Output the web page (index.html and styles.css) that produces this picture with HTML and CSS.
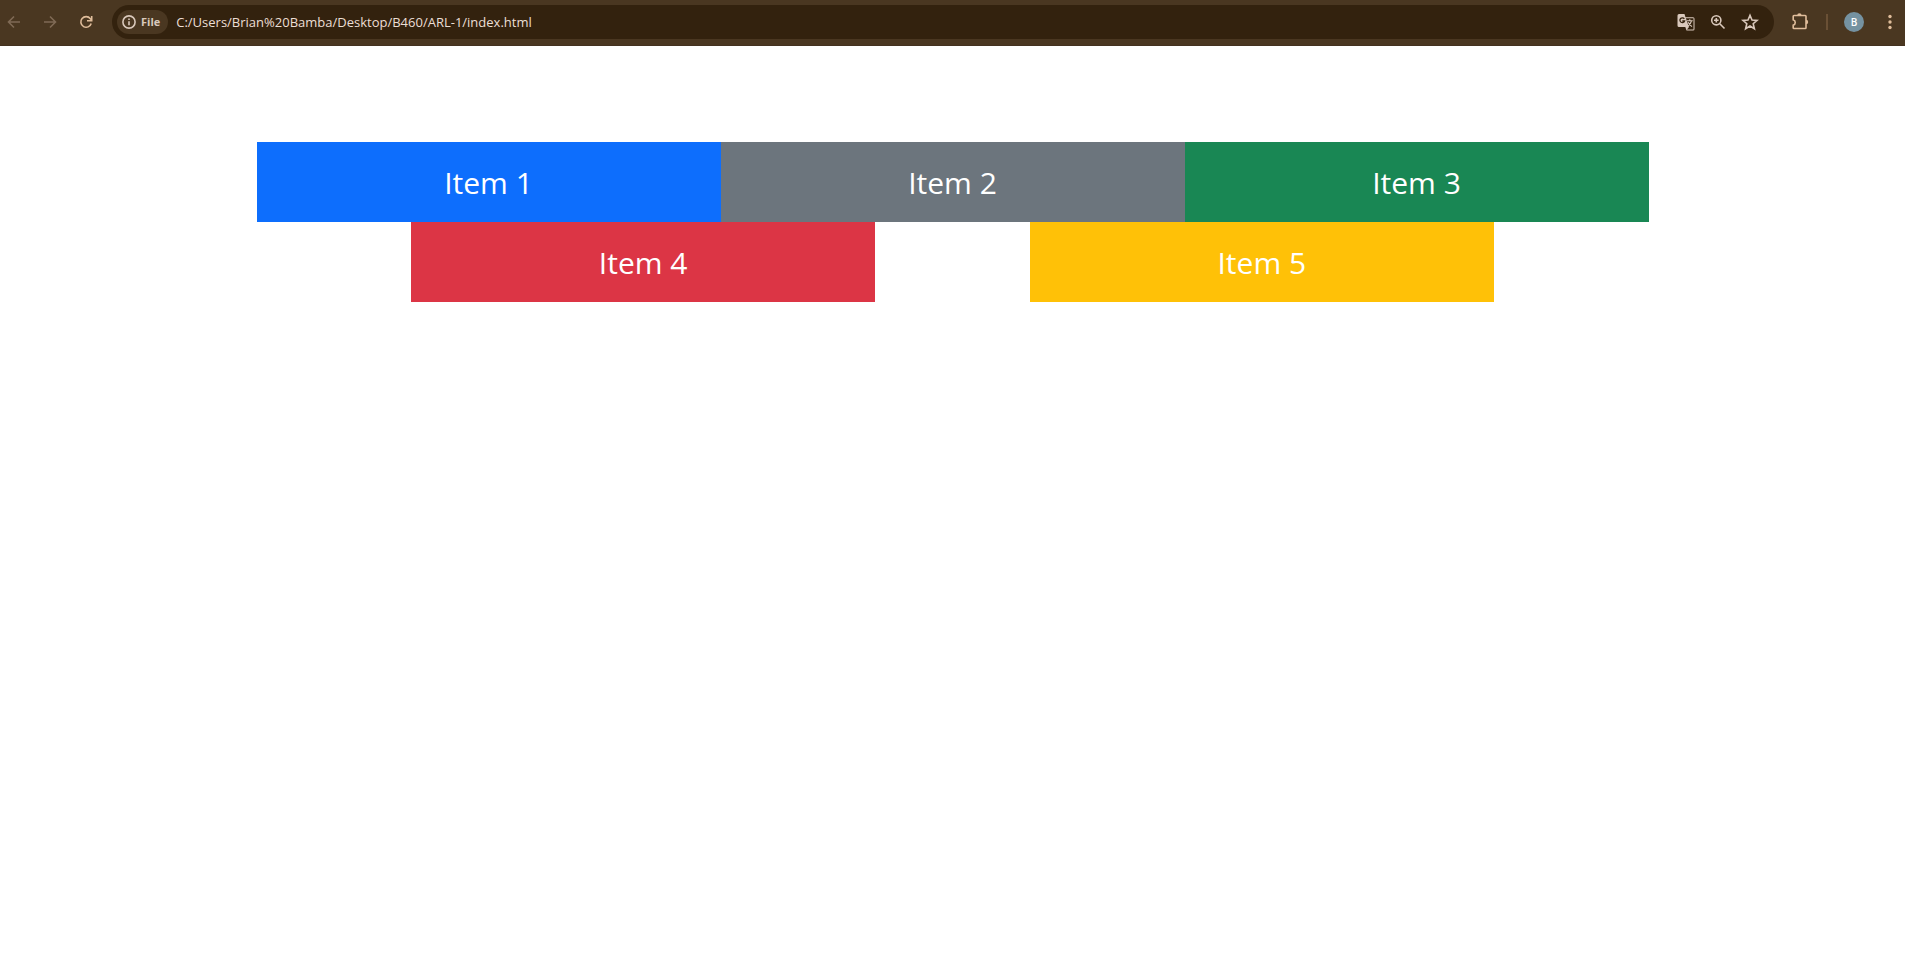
FILE: index.html
```
<!DOCTYPE html>
<html lang="en">
<head>
<meta charset="utf-8">
<title>ARL-1</title>
<link rel="stylesheet" href="styles.css">
</head>
<body>
<header class="toolbar">
  <nav class="nav" aria-label="History">
    <button class="icon-btn dim" aria-label="Back"><svg width="14" height="14" viewBox="0 0 14 14"><path d="M13 7H2M7 1.500L1.500 7L7 12.500"/></svg></button>
    <button class="icon-btn dim" aria-label="Forward"><svg width="14" height="14" viewBox="0 0 14 14"><path d="M1 7h11M7 1.500L12.500 7L7 12.500"/></svg></button>
    <button class="icon-btn" aria-label="Reload"><svg width="14" height="14" viewBox="0 0 14 14"><path d="M12.200 8.500A5.300 5.300 0 1 1 11.300 3.700L12.500 5M12.700 1v4.800H8"/></svg></button>
  </nav>
  <div class="address">
    <button class="chip"><svg width="14" height="14" viewBox="0 0 14 14"><circle cx="7" cy="7" r="6.100"/><path d="M7 6.200v4M7 3.500v1.500"/></svg>File</button>
    <input class="url" type="text" aria-label="Address" value="C:/Users/Brian%20Bamba/Desktop/B460/ARL-1/index.html">
    <div class="actions">
      <button class="action" aria-label="Translate"><svg width="18" height="18" viewBox="0 0 18 18"><path class="fill" d="M2 1h5.500l1 3.200H16a1.500 1.500 0 0 1 1.500 1.500V16a1.500 1.500 0 0 1-1.500 1.500H9.500L8.300 14H2A1.500 1.500 0 0 1 .5 12.500v-10A1.500 1.500 0 0 1 2 1z"/><path class="cut" d="M8.900 5.200h7.600v11.200H10l2-2.400z"/><path class="glyph" d="M7.300 5.800A2.400 2.400 0 1 0 7.600 8H5.300"/><path class="thin" d="M10 7.700h5.700M12.800 6.300v1.400M14.600 7.700c-.5 2.400-2 4-3.600 5.200M11.200 9.200c.8 1.800 2.200 3.300 3.800 4.400"/></svg></button>
      <button class="action" aria-label="Zoom"><svg width="16" height="16" viewBox="0 0 16 16"><circle cx="6.300" cy="6.300" r="4.600"/><path d="M9.800 9.800l4.700 4.700M6.300 4v4.600M4 6.300h4.600"/></svg></button>
      <button class="action" aria-label="Bookmark this page"><svg width="18" height="18" viewBox="0 0 18 18"><path d="M9 2.300l2 4.700 5.100.4-3.900 3.300 1.200 5L9 13l-4.400 2.700 1.200-5L1.900 7.400 7 7z"/></svg></button>
    </div>
  </div>
  <div class="tools">
    <button class="icon-btn" aria-label="Extensions"><svg width="18" height="18" viewBox="0 0 18 18"><path d="M3 2.500h11.200q.8 0 .8.800v11.400q0 .8-.8.800H3q-.8 0-.8-.8v-2.500a2.800 2.800 0 0 0 0-5.400V3.300q0-.8.800-.8z"/><path class="fill" d="M6.200 2.500a2.200 2.200 0 0 1 4.400 0zM15 6.800a2.200 2.200 0 0 1 0 4.400z"/></svg></button>
    <span class="divider"></span>
    <button class="avatar" aria-label="Profile">B</button>
    <button class="icon-btn" aria-label="Menu"><svg width="16" height="16" viewBox="0 0 16 16"><g class="fill"><circle cx="8" cy="2.500" r="1.700"/><circle cx="8" cy="8" r="1.700"/><circle cx="8" cy="13.500" r="1.700"/></g></svg></button>
  </div>
</header>
<main class="container">
  <div class="row">
    <div class="item primary">Item 1</div>
    <div class="item secondary">Item 2</div>
    <div class="item success">Item 3</div>
  </div>
  <div class="row">
    <div class="item danger">Item 4</div>
    <div class="item warning">Item 5</div>
  </div>
</main>
</body>
</html>
```
FILE: styles.css
```
* { box-sizing: border-box; }

body {
  margin: 0;
  background: #fff;
  font-family: "Open Sans", sans-serif;
}

button, input {
  margin: 0;
  padding: 0;
  border: 0;
  background: none;
  color: inherit;
  font: inherit;
}

svg {
  display: block;
  flex: none;
  fill: none;
  stroke: currentColor;
  stroke-width: 1.6;
}

.fill { fill: currentColor; stroke: none; }
.cut { fill: #33220e; stroke: none; }
.glyph { stroke: #33220e; stroke-width: 1.3; }
.thin { stroke-width: 1.1; }

.toolbar {
  display: flex;
  align-items: center;
  height: 46px;
  padding: 0 1px 2px 0;
  border-bottom: 1px solid #443220;
  background: #4a3721;
  color: #e0bd9b;
}

.nav { display: flex; gap: 8px; }

.icon-btn {
  display: flex;
  align-items: center;
  justify-content: center;
  width: 28px;
  height: 28px;
}

.dim { color: #7f6a55; }

.address {
  display: flex;
  flex: 1;
  align-items: center;
  height: 34px;
  margin-left: 12px;
  padding: 0 14px 0 5px;
  border-radius: 17px;
  background: #33220e;
  color: #d9c8bb;
}

.chip {
  display: flex;
  align-items: center;
  gap: 5px;
  height: 24px;
  padding: 0 8px 0 5px;
  border-radius: 12px;
  background: #4a3721;
  font-size: 11px;
  font-weight: 700;
}

.url {
  flex: 1;
  min-width: 0;
  height: 24px;
  margin-left: 8px;
  color: #ecdfd5;
  font-size: 13px;
}

.actions { display: flex; gap: 12px; }

.action {
  display: flex;
  align-items: center;
  justify-content: center;
  width: 20px;
  height: 20px;
}

.tools {
  display: flex;
  align-items: center;
  gap: 12px;
  margin-left: 12px;
}

.divider {
  width: 2px;
  height: 16px;
  background: #6a5035;
}

.avatar {
  width: 20px;
  height: 20px;
  margin-left: 4px;
  border-radius: 50%;
  background: #7592a1;
  color: #fff;
  font-size: 10px;
  font-weight: 600;
  line-height: 20px;
}

.container {
  max-width: 1392px;
  margin: 96px auto 0;
}

.row {
  display: flex;
  justify-content: space-evenly;
}

.item {
  width: calc(100% / 3);
  padding: 17px 16px 15px;
  color: #fff;
  font-size: 30px;
  line-height: 48px;
  text-align: center;
}

.primary { background: #0d6efd; }
.secondary { background: #6c757d; }
.success { background: #198754; }
.danger { background: #dc3545; }
.warning { background: #ffc107; }
```
